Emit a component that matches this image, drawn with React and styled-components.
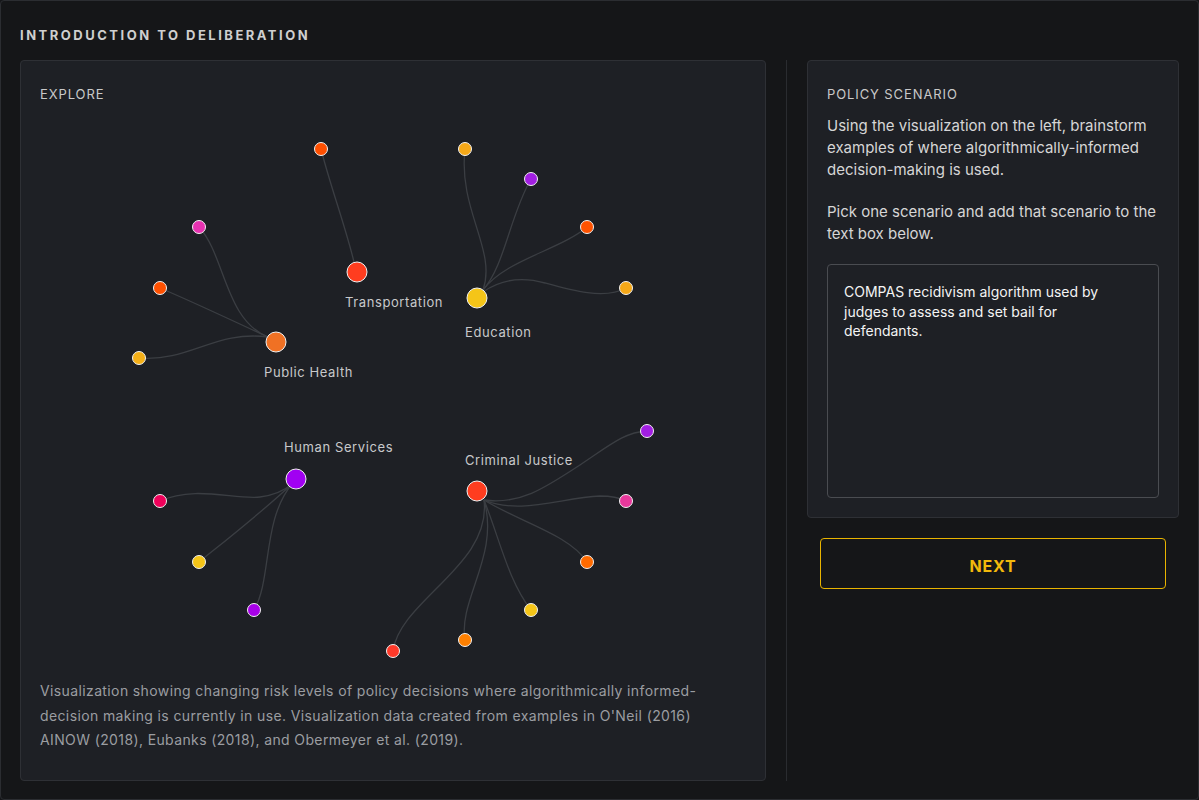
import React from "react";
import styled, { createGlobalStyle } from "styled-components";

const FONT = `"Inter", "Noto Sans", "Liberation Sans", sans-serif`;

const Global = createGlobalStyle`
  html, body { margin: 0; padding: 0; background: #151618; }
  body { font-family: ${FONT}; -webkit-font-smoothing: antialiased; }
  * { box-sizing: border-box; }
`;

const Frame = styled.div`
  width: 1199px;
  height: 800px;
  background: #151618;
  border: 1px solid #2b2d31;
  border-radius: 4px;
  padding: 26px 19px 19px;
  display: flex;
  flex-direction: column;
`;

const Title = styled.h1`
  margin: 0 0 17px;
  font-size: 13px;
  line-height: 16px;
  font-weight: 700;
  letter-spacing: 2.5px;
  color: #cfcfcf;
  text-transform: uppercase;
`;

const Body = styled.div`
  flex: 1;
  display: grid;
  grid-template-columns: 746px 1px 372px;
  column-gap: 20px;
  min-height: 0;
`;

const Card = styled.section`
  background: #1e2025;
  border: 1px solid #2e3035;
  border-radius: 4px;
  display: flex;
  flex-direction: column;
`;

const ExploreCard = styled(Card)`
  padding: 25px 0 27px;
`;

const CardLabel = styled.h2`
  margin: 0;
  font-size: 13px;
  line-height: 16px;
  font-weight: 400;
  letter-spacing: 0.9px;
  color: #c9c9c9;
  padding: ${(p) => (p.$inset ? "0 19px" : "0")};
`;

const Graph = styled.svg`
  display: block;
  margin-top: 10px;
  width: 744px;
  height: 567px;
`;

const Caption = styled.p`
  margin: 0;
  padding: 0 40px 0 19px;
  font-size: 14px;
  line-height: 24.5px;
  letter-spacing: 0.38px;
  color: #9b9da1;
`;

const Divider = styled.div`
  background: #2a2c30;
  width: 1px;
`;

const RightColumn = styled.div`
  display: flex;
  flex-direction: column;
  align-items: stretch;
`;

const ScenarioCard = styled(Card)`
  padding: 25px 19px 19px;
`;

const Para = styled.p`
  margin: ${(p) => p.$mt || "0"} 0 0;
  font-size: 15px;
  line-height: 22px;
  color: #d6d6d6;
`;

const Answer = styled.textarea`
  margin-top: 19px;
  height: 234px;
  width: 100%;
  resize: none;
  background: transparent;
  border: 1px solid #4a4c51;
  border-radius: 4px;
  padding: 17px 40px 16px 16px;
  font-family: ${FONT};
  font-size: 14px;
  line-height: 19.5px;
  color: #f4f4f4;
  outline: none;
`;

const NextButton = styled.button`
  margin: 20px 13px 0;
  height: 51px;
  padding: 4px 0 0;
  background: transparent;
  border: 1px solid #e8b400;
  border-radius: 4px;
  font-family: ${FONT};
  font-size: 16px;
  font-weight: 700;
  letter-spacing: 0.8px;
  color: #f2b90c;
  cursor: pointer;
`;

const LinkPath = styled.path`
  fill: none;
  stroke: #3b3e43;
  stroke-width: 1.3;
`;

const NodeDot = styled.circle`
  stroke: #f2f2f2;
  stroke-width: 1;
`;

const NodeLabel = styled.text`
  font-family: ${FONT};
  font-size: 13px;
  letter-spacing: 0.6px;
  fill: #c8c9cb;
`;

const hubs = [
  { name: "Transportation", x: 357, y: 272, c: "#ff3d1f", lx: 345, ly: 307 },
  { name: "Education", x: 477, y: 298, c: "#f5c518", lx: 465, ly: 337 },
  { name: "Public Health", x: 276, y: 342, c: "#f07124", lx: 264, ly: 377 },
  { name: "Human Services", x: 296, y: 479, c: "#a100f2", lx: 284, ly: 452 },
  { name: "Criminal Justice", x: 477, y: 491, c: "#ff3d1f", lx: 465, ly: 465 },
];

const leaves = [
  { x: 321, y: 149, c: "#ff4f00", d: "M321,149 C330,185 345,225 354,262" },
  { x: 465, y: 149, c: "#f5a818", d: "M465,149 C458,210 497,250 483,290" },
  { x: 531, y: 179, c: "#a21ee2", d: "M531,179 C510,215 505,265 483,290" },
  { x: 587, y: 227, c: "#ff5200", d: "M587,227 C560,250 505,260 483,290" },
  { x: 626, y: 288, c: "#f5a818", d: "M483,292 C500,280 520,276 545,283 S605,300 626,288" },
  { x: 199, y: 227, c: "#e832b2", d: "M199,227 C225,255 225,320 268,337" },
  { x: 160, y: 288, c: "#ff5000", d: "M160,288 C200,305 235,322 268,337" },
  { x: 139, y: 358, c: "#f5b018", d: "M139,358 C190,362 215,330 268,337" },
  { x: 160, y: 501, c: "#f0005a", d: "M160,501 C195,485 235,500 260,497 C275,495 285,490 292,484" },
  { x: 199, y: 562, c: "#f5c518", d: "M199,562 C230,537 262,512 292,484" },
  { x: 254, y: 610, c: "#a800e8", d: "M254,610 C272,580 262,520 292,484" },
  { x: 647, y: 431, c: "#a21ee2", d: "M484,500 C520,505 545,488 580,465 C610,445 625,432 647,431" },
  { x: 626, y: 501, c: "#e8389c", d: "M484,500 C520,515 560,498 600,496 C612,496 620,498 626,501" },
  { x: 587, y: 562, c: "#ff6a00", d: "M484,500 C520,522 570,535 587,562" },
  { x: 531, y: 610, c: "#f5c518", d: "M484,500 C500,540 508,580 531,610" },
  { x: 465, y: 640, c: "#ff8000", d: "M484,500 C500,555 458,600 465,640" },
  { x: 393, y: 651, c: "#ff3a2a", d: "M484,500 C492,565 400,600 393,651" },
];

function RiskGraph() {
  return (
    <Graph viewBox="21 112 744 567">
      {leaves.map((l, i) => (
        <LinkPath key={`l${i}`} d={l.d} />
      ))}
      {leaves.map((l, i) => (
        <NodeDot key={`n${i}`} cx={l.x} cy={l.y} r={6.5} fill={l.c} />
      ))}
      {hubs.map((h) => (
        <g key={h.name}>
          <NodeDot cx={h.x} cy={h.y} r={10} fill={h.c} />
          <NodeLabel x={h.lx} y={h.ly}>
            {h.name}
          </NodeLabel>
        </g>
      ))}
    </Graph>
  );
}

export default function App() {
  return (
    <>
      <Global />
      <Frame>
        <Title>Introduction to Deliberation</Title>
        <Body>
          <ExploreCard>
            <CardLabel $inset>EXPLORE</CardLabel>
            <RiskGraph />
            <Caption>
              Visualization showing changing risk levels of policy decisions where algorithmically informed-decision
              making is currently in use. Visualization data created from examples in O'Neil (2016) AINOW (2018),
              Eubanks (2018), and Obermeyer et al. (2019).
            </Caption>
          </ExploreCard>
          <Divider />
          <RightColumn>
            <ScenarioCard>
              <CardLabel>POLICY SCENARIO</CardLabel>
              <Para $mt="13px">
                Using the visualization on the left, brainstorm examples of where algorithmically-informed
                decision-making is used.
              </Para>
              <Para $mt="20px">Pick one scenario and add that scenario to the text box below.</Para>
              <Answer defaultValue="COMPAS recidivism algorithm used by judges to assess and set bail for defendants." />
            </ScenarioCard>
            <NextButton>NEXT</NextButton>
          </RightColumn>
        </Body>
      </Frame>
    </>
  );
}
